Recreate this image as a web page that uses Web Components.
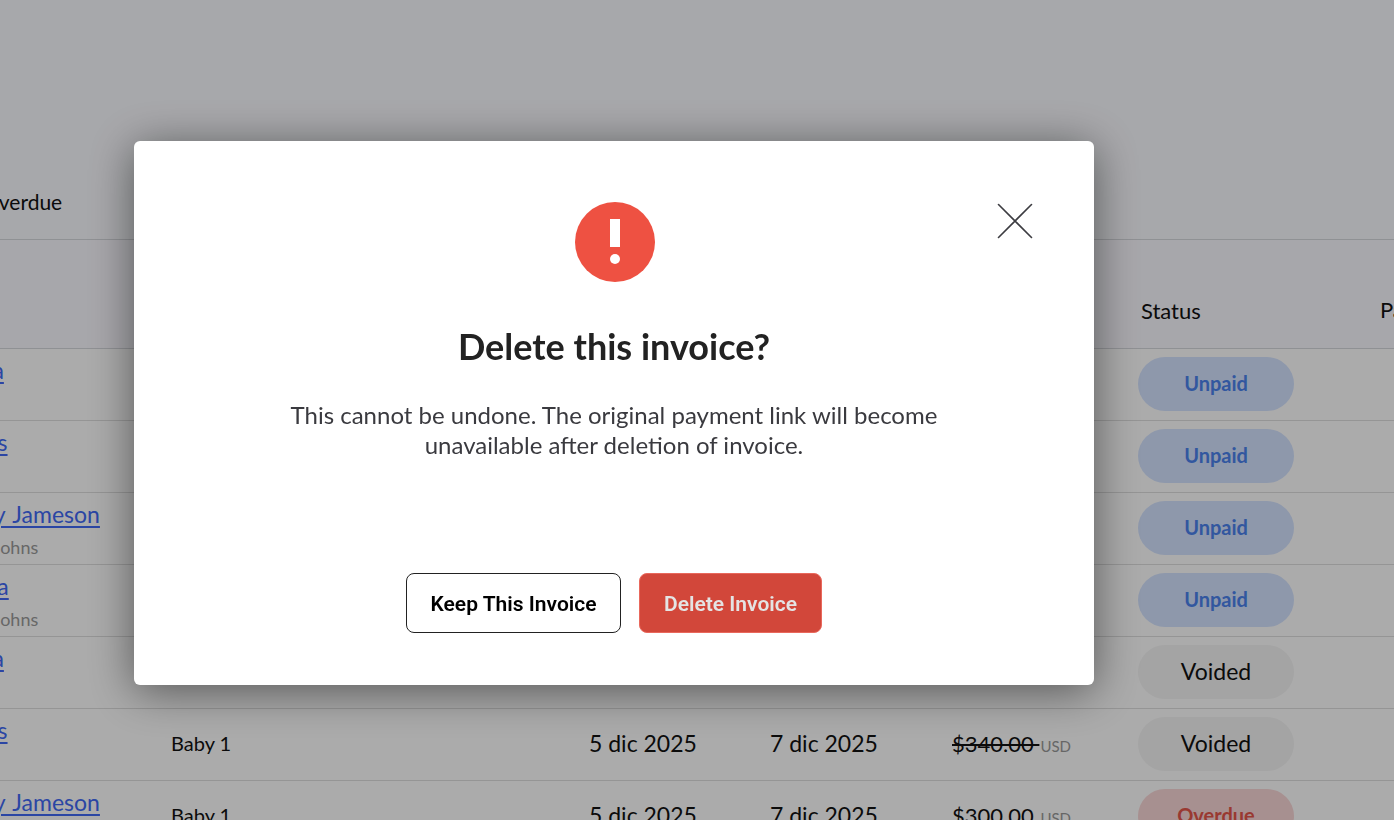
<!DOCTYPE html>
<html lang="en">
<head>
<meta charset="utf-8">
<title>Invoices</title>
<style>
  html, body { margin: 0; height: 820px; overflow: hidden; background: #fff; }
  body { font-family: Lato, "Liberation Sans", sans-serif; color: #111; }
</style>
</head>
<body>
<invoice-page>
  <invoice-row kind="head"></invoice-row>
  <invoice-row name="Dana" status="unpaid"></invoice-row>
  <invoice-row name="Lewis" status="unpaid"></invoice-row>
  <invoice-row name="Emily Jameson" sub="Mary Johns" status="unpaid"></invoice-row>
  <invoice-row name="Maria" sub="Mary Johns" status="unpaid"></invoice-row>
  <invoice-row name="Dana" status="voided"></invoice-row>
  <invoice-row name="Lewis" baby="Baby 1" sent="5 dic 2025" due="7 dic 2025" amount="$340.00" status="voided"></invoice-row>
  <invoice-row name="Emily Jameson" baby="Baby 1" sent="5 dic 2025" due="7 dic 2025" amount="$300.00" status="overdue"></invoice-row>
</invoice-page>

<confirm-dialog heading="Delete this invoice?">
  This cannot be undone. The original payment link will become<br>unavailable after deletion of invoice.
  <dialog-button slot="actions">Keep This Invoice</dialog-button>
  <dialog-button slot="actions" danger>Delete Invoice</dialog-button>
</confirm-dialog>

<script>
customElements.define('invoice-page',
class extends HTMLElement {
    connectedCallback() {
        if (this.shadowRoot) { return; }
        var shadow = this.attachShadow({mode: 'open'});
        shadow.innerHTML = `
        <style>
            :host { display: block; height: 820px; overflow: hidden; background: #fff; }
            .tabs {
                height: 240px;
                box-sizing: border-box;
                display: flex;
                align-items: flex-end;
                padding: 0 0 25px 0;
                background: #fafbff;
                border-bottom: 1px solid #d6d8dd;
                font-size: 21px;
            }
            .tabs span { margin-left: -18px; }
        </style>
        <div class="tabs"><span>Overdue</span></div>
        <slot></slot>
        `;
    }
});

customElements.define('status-pill',
class extends HTMLElement {
    connectedCallback() {
        if (this.shadowRoot) { return; }
        var shadow = this.attachShadow({mode: 'open'});
        shadow.innerHTML = `
        <style>
            :host {
                display: flex;
                align-items: center;
                justify-content: center;
                box-sizing: border-box;
                width: 156px;
                height: 54px;
                padding-bottom: 2px;
                border-radius: 27px;
                font-size: 20px;
                font-weight: 700;
            }
            :host([kind="unpaid"]) { background: #d4e3ff; color: #4b82ee; }
            :host([kind="voided"]) { background: #f5f5f5; color: #111; font-size: 23px; font-weight: 400; }
            :host([kind="overdue"]) { background: #fad7d7; color: #e5564a; }
        </style>
        <slot></slot>
        `;
    }
});

customElements.define('invoice-row',
class extends HTMLElement {
    connectedCallback() {
        if (this.shadowRoot) { return; }
        var a = (n) => this.getAttribute(n) || '';
        var status = a('status');
        var head = a('kind') == 'head';
        var label = status ? status[0].toUpperCase() + status.slice(1) : '';
        var shadow = this.attachShadow({mode: 'open'});
        var name = a('name') ? `<a class="name">${a('name')}</a>` : '';
        var sub = a('sub') ? `<div class="sub">${a('sub')}</div>` : '';
        var amount = '';
        if (a('amount')) {
            amount = status == 'voided'
                ? `<s>${a('amount')}&nbsp;</s><small>USD</small>`
                : `<span>${a('amount')}</span> <small>USD</small>`;
        }
        shadow.innerHTML = `
        <style>
            :host {
                display: grid;
                grid-template-columns: 171px 418px 181px 182px 186px 242px 14px;
                height: 72px;
                box-sizing: border-box;
                border-bottom: 1px solid #dedede;
                font-size: 22px;
                background: #fff;
            }
            :host([kind="head"]) { height: 109px; padding-top: 34px; background: #faf9ff; border-bottom-color: #d6d8dd; }
            .cell { align-self: center; white-space: nowrap; margin-top: -4px; }
            .who { align-self: start; margin: 0 0 0 -49px; padding-top: 7px; font-size: 23px; word-spacing: 2px; }
            .name { color: #4169f5; text-decoration: underline; text-underline-offset: 3px; text-decoration-thickness: 2px; }
            .sub { color: #9a9a9a; font-size: 18px; margin: 8px 0 0 -3px; word-spacing: 0; }
            .baby { font-size: 20px; }
            .date { font-size: 23px; }
            .money { margin-top: -2px; }
            small { color: #999; font-size: 15px; margin-left: 1px; }
            .status { justify-self: start; margin-top: -2px; }
            .hd { margin-left: 3px; font-size: 22px; }
        </style>
        <div class="cell who">${name}${sub}</div>
        <div class="cell baby">${a('baby')}</div>
        <div class="cell date">${a('sent')}</div>
        <div class="cell date">${a('due')}</div>
        <div class="cell money">${amount}</div>
        <div class="cell status">${
            head ? `<span class="hd">Status</span>` : `<status-pill kind="${status}">${label}</status-pill>`
        }</div>
        <div class="cell">${head ? `<span style="font-size:22px">Pay</span>` : ''}</div>
        `;
    }
});

customElements.define('dialog-button',
class extends HTMLElement {
    connectedCallback() {
        if (this.shadowRoot) { return; }
        var shadow = this.attachShadow({mode: 'open'});
        shadow.innerHTML = `
        <style>
            :host {
                display: flex;
                align-items: center;
                justify-content: center;
                box-sizing: border-box;
                height: 60px;
                width: 215px;
                padding-top: 2px;
                border: 1px solid #222;
                border-radius: 8px;
                background: #fff;
                color: #000;
                font: 600 21px Roboto, sans-serif;
            }
            :host([danger]) { width: 183px; background: #d2473a; border-color: #e9685c; color: #e4e4e4; }
        </style>
        <slot></slot>
        `;
    }
});

customElements.define('confirm-dialog',
class extends HTMLElement {
    connectedCallback() {
        if (this.shadowRoot) { return; }
        var shadow = this.attachShadow({mode: 'open'});
        shadow.innerHTML = `
        <style>
            :host {
                position: fixed;
                inset: 0;
                background: rgba(0, 0, 0, .33);
                display: flex;
                align-items: flex-start;
                padding: 141px 0 0 134px;
            }
            .box {
                position: relative;
                width: 960px;
                height: 544px;
                box-sizing: border-box;
                padding: 61px 0 52px;
                background: #fff;
                border-radius: 6px;
                box-shadow: 0 6px 45px rgba(0, 0, 0, .5);
                display: flex;
                flex-direction: column;
                align-items: center;
            }
            .icon { margin-left: 1px; }
            .close { position: absolute; left: 863px; top: 62px; }
            h2 { margin: 41px 0 0; font-size: 36px; line-height: 46px; font-weight: 700; color: #222; }
            .text { margin-top: 31px; font-size: 24px; line-height: 30px; text-align: center; color: #3a3a3f; }
            .actions { margin-top: auto; display: flex; gap: 18px; }
        </style>
        <div class="box">
            <svg class="icon" width="80" height="80" viewBox="0 0 80 80">
                <circle cx="40" cy="40" r="40" fill="#ee5142"/>
                <rect x="35" y="17" width="10" height="28" fill="#fff"/>
                <circle cx="40" cy="57" r="5" fill="#fff"/>
            </svg>
            <svg class="close" width="36" height="36" viewBox="0 0 36 36">
                <path d="M1.5 1.5 34.5 34.5M34.5 1.5 1.5 34.5" stroke="#3c3c41" stroke-width="1.6" stroke-linecap="round" fill="none"/>
            </svg>
            <h2>${this.getAttribute('heading')}</h2>
            <div class="text"><slot></slot></div>
            <div class="actions"><slot name="actions"></slot></div>
        </div>
        `;
    }
});
</script>
</body>
</html>
